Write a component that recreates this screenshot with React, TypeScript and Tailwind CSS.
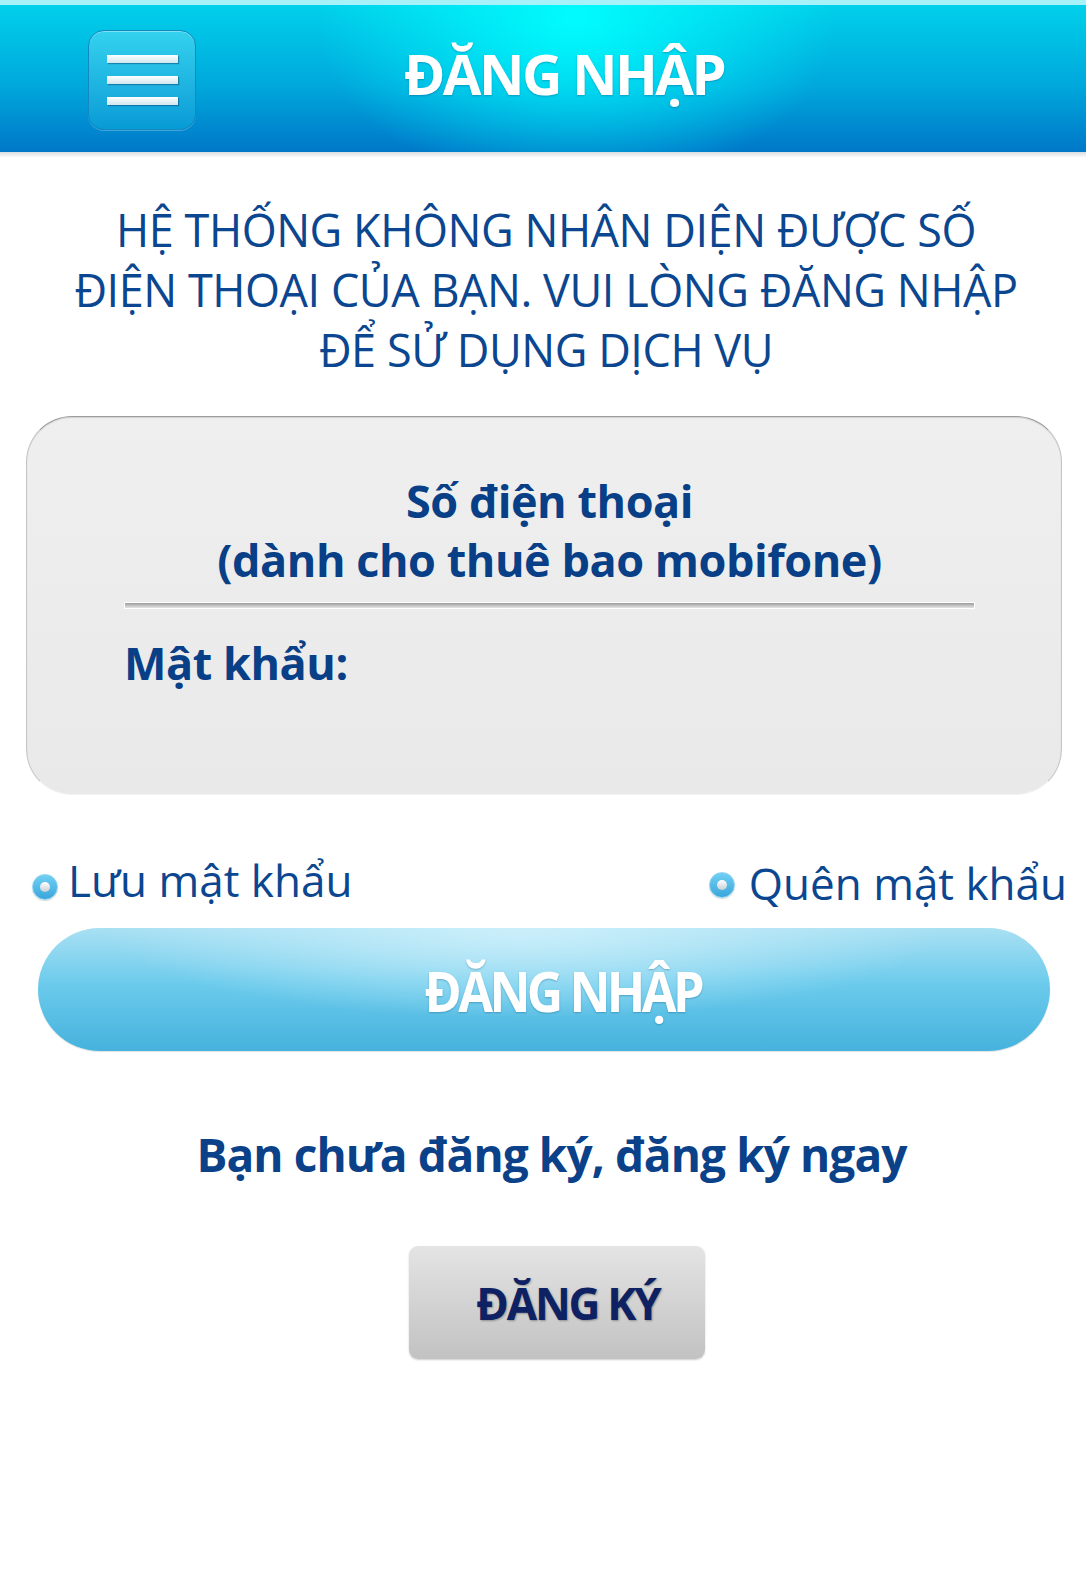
import React from "react";

const font = { fontFamily: '"Open Sans", "Noto Sans", sans-serif' };

function Bullet() {
  return (
    <span className="flex h-[26px] w-[26px] shrink-0 items-center justify-center rounded-full border border-[#8fd3ee] bg-gradient-to-b from-[#6fd0f4] to-[#3aa6da] shadow-[0_1px_1px_rgba(0,0,0,0.15)]">
      <span className="h-[10px] w-[10px] rounded-full bg-gradient-to-b from-white to-[#c9cfd4]" />
    </span>
  );
}

function MenuButton() {
  return (
    <button
      type="button"
      className="flex h-[100px] w-[108px] shrink-0 flex-col items-center justify-center gap-[13px] rounded-[16px] border border-[#1289c0] bg-gradient-to-b from-[#34d2ee] to-[#079bd6] shadow-[inset_0_1px_0_rgba(255,255,255,0.35),0_1px_0_rgba(255,255,255,0.25)]"
    >
      <span className="h-[8px] w-[71px] bg-gradient-to-b from-white to-[#cfe6ee] shadow-[1px_1px_1px_rgba(0,60,110,0.45)]" />
      <span className="h-[8px] w-[71px] bg-gradient-to-b from-white to-[#cfe6ee] shadow-[1px_1px_1px_rgba(0,60,110,0.45)]" />
      <span className="h-[8px] w-[71px] bg-gradient-to-b from-white to-[#cfe6ee] shadow-[1px_1px_1px_rgba(0,60,110,0.45)]" />
    </button>
  );
}

export default function App() {
  return (
    <div className="min-h-[1591px] w-full bg-white" style={font}>
      {/* header */}
      <header className="flex h-[152px] items-center border-t-[5px] border-[#a6f1fa] bg-[image:radial-gradient(ellipse_260px_170px_at_53%_10%,rgba(0,255,255,0.95),rgba(0,255,255,0)_100%),linear-gradient(to_bottom,#00d0ea,#00a8dc_55%,#0077c8)] pt-[2px]">
        <div className="ml-[88px]">
          <MenuButton />
        </div>
        <h1 className="mb-[14px] flex-1 pr-[154px] text-center text-[56px] font-bold leading-none tracking-[-0.045em] text-white [text-shadow:0_1px_2px_rgba(0,60,120,0.35)]">
          ĐĂNG NHẬP
        </h1>
      </header>
      <div className="h-[6px] bg-gradient-to-b from-[#d9dde0] to-white" />

      {/* message */}
      <p className="mt-[42px] pl-[16px] pr-[10px] text-center text-[45px] leading-[60px] tracking-[-0.01em] text-[#0b4690]">
        HỆ THỐNG KHÔNG NHÂN DIỆN ĐƯỢC SỐ
        <br />
        ĐIỆN THOẠI CỦA BẠN. VUI LÒNG ĐĂNG NHẬP
        <br />
        ĐỂ SỬ DỤNG DỊCH VỤ
      </p>

      {/* form card */}
      <div className="mx-[26px] mt-[36px] flex h-[379px] w-[1036px] flex-col rounded-[46px] border border-t-[#9b9b9b] border-x-[#c4c4c4] border-b-[#f2f2f2] bg-gradient-to-b from-[#efefef] to-[#e9e9e9] pl-[97px] pr-[86px] pt-[54px] shadow-[inset_0_1px_1px_rgba(0,0,0,0.12)]">
        <p className="text-center text-[45px] font-bold leading-[59px] tracking-[-0.01em] text-[#083f87]">
          Số điện thoại
          <br />
          (dành cho thuê bao mobifone)
        </p>
        <div className="mt-[13px] h-[7px] w-full border border-white bg-gradient-to-b from-[#9d9d9d] to-[#e4e4e4]" />
        <p className="mt-[24px] text-[45px] font-bold leading-[59px] tracking-[-0.01em] text-[#083f87]">
          Mật khẩu:
        </p>
      </div>

      {/* links */}
      <div className="mt-[54px] flex items-center justify-between pl-[32px] pr-[19px] text-[#0b4690]">
        <div className="flex items-center gap-[10px]">
          <span className="mt-[14px]">
            <Bullet />
          </span>
          <span className="text-[44px] leading-[56px]">Lưu mật khẩu</span>
        </div>
        <div className="flex items-center gap-[14px]">
          <span className="mt-[10px]">
            <Bullet />
          </span>
          <span className="mt-[6px] text-[44px] leading-[56px]">Quên mật khẩu</span>
        </div>
      </div>

      {/* login button */}
      <div className="mt-[17px] px-[38px]">
        <button
          type="button"
          className="flex h-[123px] w-[1012px] items-center justify-center rounded-full bg-[image:radial-gradient(ellipse_420px_90px_at_48%_0%,rgba(205,240,251,0.95),rgba(205,240,251,0)_100%),linear-gradient(to_bottom,#a9e0f3,#6ccbec_45%,#46b2dd)] pl-[38px] shadow-[0_1px_1px_rgba(0,0,0,0.12)]"
        >
          <span className="inline-block scale-x-90 text-[56px] font-bold leading-none tracking-[-0.07em] text-white [text-shadow:0_1px_2px_rgba(0,80,130,0.35)]">
            ĐĂNG NHẬP
          </span>
        </button>
      </div>

      {/* register */}
      <p className="mt-[73px] pl-[17px] text-center text-[46px] font-bold leading-[60px] tracking-[-0.02em] text-[#0a4189]">
        Bạn chưa đăng ký, đăng ký ngay
      </p>
      <div className="mt-[62px] flex justify-center pl-[28px]">
        <button
          type="button"
          className="flex h-[113px] w-[296px] items-center justify-center rounded-[9px] bg-gradient-to-b from-[#e4e4e4] to-[#c2c2c2] pl-[22px] shadow-[0_1px_2px_rgba(0,0,0,0.2)]"
        >
          <span className="text-[44px] font-bold leading-none tracking-[-0.05em] text-[#0d2163] [text-shadow:1px_1px_2px_rgba(0,0,0,0.3)]">
            ĐĂNG KÝ
          </span>
        </button>
      </div>
    </div>
  );
}
